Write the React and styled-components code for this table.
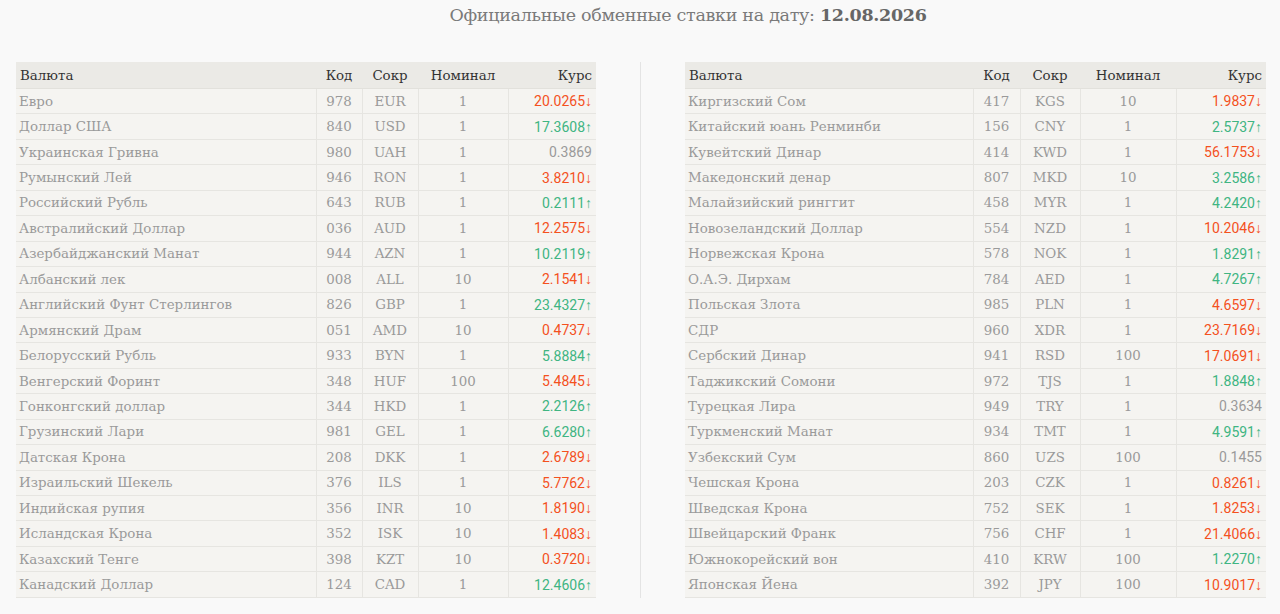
import React from "react";
import styled, { createGlobalStyle } from "styled-components";

const GlobalStyle = createGlobalStyle`
  html, body {
    margin: 0;
    padding: 0;
    background: #f9f9f9;
  }
  body {
    font-family: "DejaVu Serif", "Liberation Serif", serif;
  }
`;

const left = [
  ["Евро", "978", "EUR", "1", "20.0265", "down"],
  ["Доллар США", "840", "USD", "1", "17.3608", "up"],
  ["Украинская Гривна", "980", "UAH", "1", "0.3869", ""],
  ["Румынский Лей", "946", "RON", "1", "3.8210", "down"],
  ["Российский Рубль", "643", "RUB", "1", "0.2111", "up"],
  ["Австралийский Доллар", "036", "AUD", "1", "12.2575", "down"],
  ["Азербайджанский Манат", "944", "AZN", "1", "10.2119", "up"],
  ["Албанский лек", "008", "ALL", "10", "2.1541", "down"],
  ["Английский Фунт Стерлингов", "826", "GBP", "1", "23.4327", "up"],
  ["Армянский Драм", "051", "AMD", "10", "0.4737", "down"],
  ["Белорусский Рубль", "933", "BYN", "1", "5.8884", "up"],
  ["Венгерский Форинт", "348", "HUF", "100", "5.4845", "down"],
  ["Гонконгский доллар", "344", "HKD", "1", "2.2126", "up"],
  ["Грузинский Лари", "981", "GEL", "1", "6.6280", "up"],
  ["Датская Крона", "208", "DKK", "1", "2.6789", "down"],
  ["Израильский Шекель", "376", "ILS", "1", "5.7762", "down"],
  ["Индийская рупия", "356", "INR", "10", "1.8190", "down"],
  ["Исландская Крона", "352", "ISK", "10", "1.4083", "down"],
  ["Казахский Тенге", "398", "KZT", "10", "0.3720", "down"],
  ["Канадский Доллар", "124", "CAD", "1", "12.4606", "up"],
];

const right = [
  ["Киргизский Сом", "417", "KGS", "10", "1.9837", "down"],
  ["Китайский юань Ренминби", "156", "CNY", "1", "2.5737", "up"],
  ["Кувейтский Динар", "414", "KWD", "1", "56.1753", "down"],
  ["Македонский денар", "807", "MKD", "10", "3.2586", "up"],
  ["Малайзийский ринггит", "458", "MYR", "1", "4.2420", "up"],
  ["Новозеландский Доллар", "554", "NZD", "1", "10.2046", "down"],
  ["Норвежская Крона", "578", "NOK", "1", "1.8291", "up"],
  ["О.А.Э. Дирхам", "784", "AED", "1", "4.7267", "up"],
  ["Польская Злота", "985", "PLN", "1", "4.6597", "down"],
  ["СДР", "960", "XDR", "1", "23.7169", "down"],
  ["Сербский Динар", "941", "RSD", "100", "17.0691", "down"],
  ["Таджикский Сомони", "972", "TJS", "1", "1.8848", "up"],
  ["Турецкая Лира", "949", "TRY", "1", "0.3634", ""],
  ["Туркменский Манат", "934", "TMT", "1", "4.9591", "up"],
  ["Узбекский Сум", "860", "UZS", "100", "0.1455", ""],
  ["Чешская Крона", "203", "CZK", "1", "0.8261", "down"],
  ["Шведская Крона", "752", "SEK", "1", "1.8253", "down"],
  ["Швейцарский Франк", "756", "CHF", "1", "21.4066", "down"],
  ["Южнокорейский вон", "410", "KRW", "100", "1.2270", "up"],
  ["Японская Йена", "392", "JPY", "100", "10.9017", "down"],
];

const Page = styled.div`
  padding: 3px 14px 16px 16px;
`;

// the heading sits right of centre in the original layout
const Title = styled.h1`
  margin: 0 0 35px;
  padding-left: 94px;
  text-align: center;
  font-size: 17.5px;
  font-weight: 400;
  line-height: 24px;
  color: #7a7a7a;
  letter-spacing: -0.3px;

  b {
    font-weight: 700;
    color: #666;
  }
`;

const Columns = styled.div`
  display: flex;
  align-items: stretch;
  gap: 44px;
`;

const Divider = styled.div`
  width: 1px;
  background: #e4e4e4;
`;

const Table = styled.table`
  width: ${(p) => p.$width}px;
  border-collapse: collapse;
  table-layout: fixed;
  font-size: 13.4px;
`;

const Col = styled.col`
  width: ${(p) => p.$w}px;
`;

const HeadCell = styled.th`
  height: 26px;
  padding: 0 4px;
  background: #ebeae6;
  color: #333;
  font-weight: 400;
  text-align: ${(p) => p.$align || "center"};
  border-bottom: 1px solid #e2e1dc;
  white-space: nowrap;
`;

const Row = styled.tr`
  height: 25.45px;
  background: #f5f4f1;
`;

const Cell = styled.td`
  padding: 0 4px;
  color: #9a9a9a;
  text-align: ${(p) => p.$align || "center"};
  border-bottom: 1px solid #e6e5e1;
  border-left: 1px solid #e6e5e1;
  white-space: nowrap;

  &:first-child {
    border-left: none;
    padding-left: 3px;
  }
`;

const Rate = styled(Cell)`
  font-family: Roboto, "Noto Sans", sans-serif;
  font-size: 14px;
  color: ${(p) =>
    p.$dir === "down" ? "#f4511e" : p.$dir === "up" ? "#40b582" : "#9a9a9a"};
`;

const CurrencyTable = ({ rows, cols }) => (
  <Table $width={cols.reduce((a, b) => a + b, 0)}>
    <colgroup>
      {cols.map((w, i) => (
        <Col key={i} $w={w} />
      ))}
    </colgroup>
    <thead>
      <tr>
        <HeadCell $align="left">Валюта</HeadCell>
        <HeadCell>Код</HeadCell>
        <HeadCell>Сокр</HeadCell>
        <HeadCell>Номинал</HeadCell>
        <HeadCell $align="right">Курс</HeadCell>
      </tr>
    </thead>
    <tbody>
      {rows.map(([name, code, abbr, nom, rate, dir]) => (
        <Row key={abbr}>
          <Cell $align="left">{name}</Cell>
          <Cell>{code}</Cell>
          <Cell>{abbr}</Cell>
          <Cell>{nom}</Cell>
          <Rate $align="right" $dir={dir}>
            {rate}
            {dir === "down" ? "↓" : dir === "up" ? "↑" : ""}
          </Rate>
        </Row>
      ))}
    </tbody>
  </Table>
);

export default function App() {
  return (
    <>
      <GlobalStyle />
      <Page>
        <Title>
          Официальные обменные ставки на дату: <b>12.08.2026</b>
        </Title>
        <Columns>
          <CurrencyTable rows={left} cols={[300, 46, 56, 90, 88]} />
          <Divider />
          <CurrencyTable rows={right} cols={[288, 47, 60, 96, 90]} />
        </Columns>
      </Page>
    </>
  );
}
